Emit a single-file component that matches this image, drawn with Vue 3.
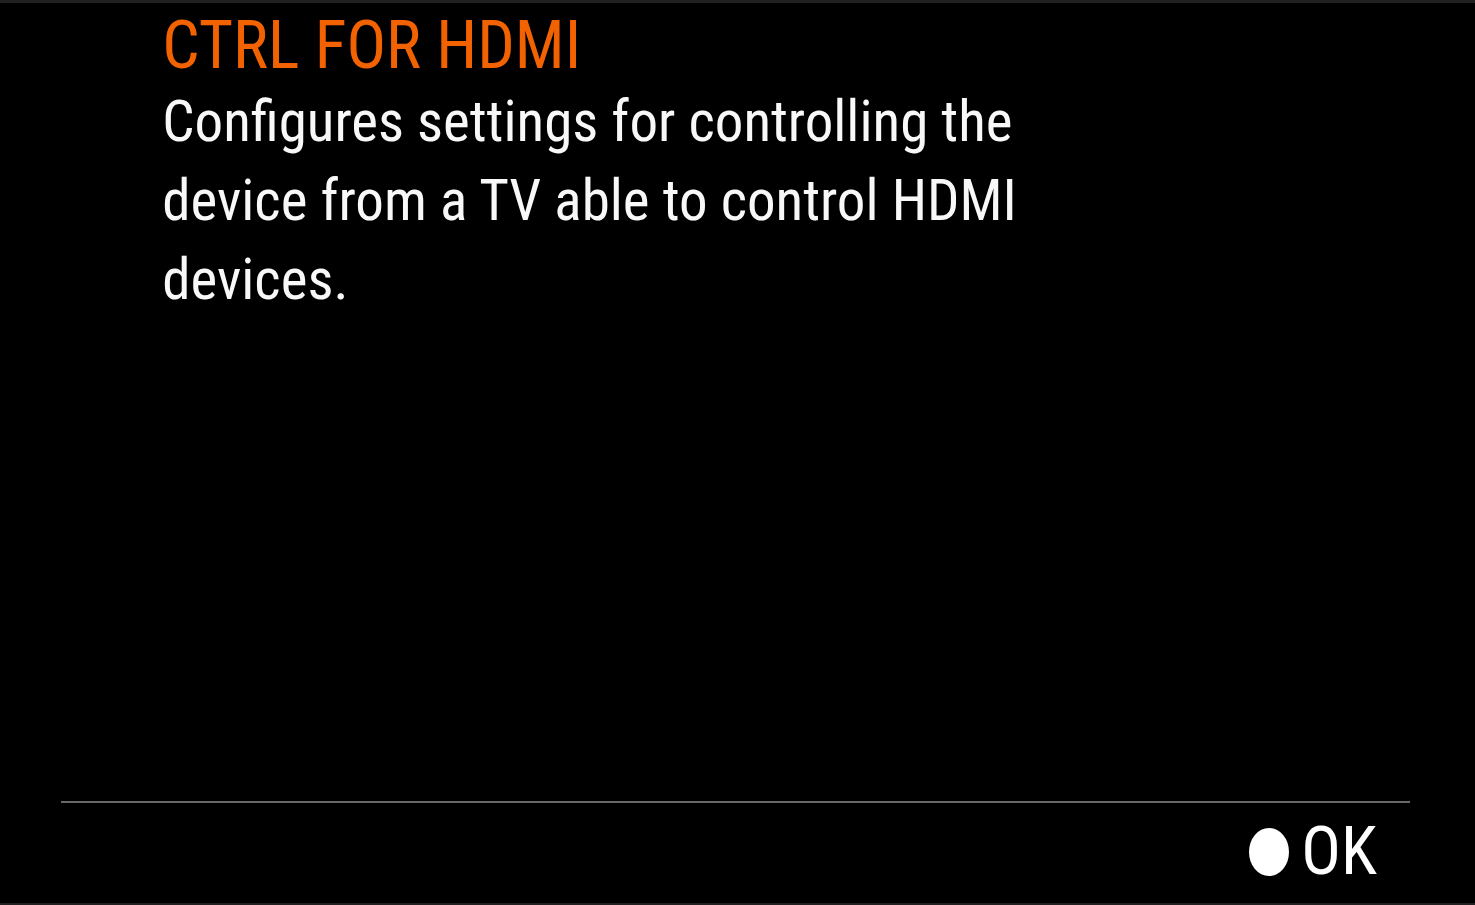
<script setup>
const title = 'CTRL FOR HDMI'
const lines = [
  'Configures settings for controlling the',
  'device from a TV able to control HDMI',
  'devices.',
]
</script>

<template>
  <main class="screen">
    <section class="help">
      <h1 class="title">{{ title }}</h1>
      <p class="text">
        <span v-for="line in lines" :key="line" class="line">{{ line }}</span>
      </p>
    </section>
    <footer class="footer">
      <button class="ok" type="button">
        <svg class="dot" viewBox="0 0 40 48" aria-hidden="true">
          <ellipse cx="20" cy="24" rx="20" ry="24" fill="#fff" />
        </svg>
        <span>OK</span>
      </button>
    </footer>
  </main>
</template>

<style>
body {
  margin: 0;
  background: #000;
}
</style>

<style scoped>
.screen {
  box-sizing: border-box;
  min-height: 100vh;
  display: flex;
  flex-direction: column;
  justify-content: space-between;
  background: #000;
  border-top: 3px solid #212121;
  border-bottom: 2px solid #212121;
  color: #f8f8f8;
  font-family: "Roboto Condensed", Roboto, sans-serif;
}
.help {
  padding: 6px 11% 0;
}
.title {
  margin: 0;
  color: #f26200;
  font-size: 66px;
  line-height: 73px;
  font-weight: 400;
}
.text {
  margin: 0;
  font-size: 57px;
  line-height: 79px;
}
.line {
  display: block;
  white-space: nowrap;
}
.footer {
  display: flex;
  justify-content: flex-end;
  margin: 0 65px 0 61px;
  padding: 10px 33px 12px 0;
  border-top: 2px solid #686868;
}
.ok {
  display: flex;
  align-items: center;
  gap: 12px;
  padding: 0;
  border: 0;
  background: none;
  color: #fff;
  font-family: inherit;
  font-size: 66px;
  line-height: 78px;
}
.dot {
  width: 40px;
  height: 48px;
}
</style>
